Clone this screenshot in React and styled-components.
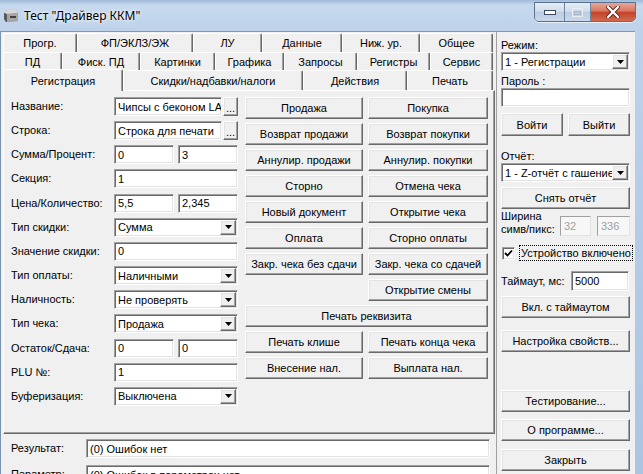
import React from 'react'
import styled, { createGlobalStyle, css } from 'styled-components'

const GlobalStyle = createGlobalStyle`
  html, body { margin: 0; padding: 0; background: #b9cfe8; }
  body {
    font-family: "Liberation Sans", Arial, sans-serif;
    font-size: 11px;
    color: #000;
  }
  * { box-sizing: border-box; }
`

const raised = css`
  background: #f0f0f0;
  border: 1px solid;
  border-color: #fff #696969 #696969 #fff;
  box-shadow: inset -1px -1px #a0a0a0, inset 1px 1px #e3e3e3;
`

const sunken = css`
  background: #fff;
  border: 1px solid;
  border-color: #a0a0a0 #fff #fff #a0a0a0;
  box-shadow: inset 1px 1px #696969, inset -1px -1px #e3e3e3;
`

const Window = styled.div`
  width: 643px;
  height: 474px;
  overflow: hidden;
  display: flex;
  flex-direction: column;
  background: linear-gradient(180deg, #9fb9d8 0, #c6d9ee 5px, #bdd2ea 30px, #aac4e2 100%);
`

const TitleBar = styled.div`
  height: 31px;
  flex-shrink: 0;
  display: flex;
  align-items: flex-start;
  padding: 0 7px 0 3px;
`

const AppIcon = styled.svg`
  margin-top: 9px;
  flex-shrink: 0;
`

const Title = styled.div`
  margin: 8px 0 0 5px;
  font-family: "Noto Sans", "Open Sans", sans-serif;
  font-size: 12px;
  line-height: 16px;
  color: #000;
  text-shadow: 0 0 6px #fff, 0 0 3px #fff;
`

const Captions = styled.div`
  display: flex;
  margin: 2px 0 0 auto;
  border: 1px solid #5b6f8d;
  border-radius: 0 0 5px 5px;
  overflow: hidden;
  box-shadow: 0 1px 0 rgba(255, 255, 255, 0.6);
`

const CapBtn = styled.div`
  width: ${p => p.$w}px;
  height: 18px;
  display: flex;
  align-items: center;
  justify-content: center;
  border-left: ${p => (p.$first ? 'none' : '1px solid #6f819b')};
  background: ${p =>
    p.$close
      ? 'linear-gradient(180deg, #e8a898 0, #d9765f 45%, #c4432a 52%, #cf6a4e 100%)'
      : 'linear-gradient(180deg, #e4ecf6 0, #d2deec 45%, #bccde2 52%, #c9d8ea 100%)'};
`

const Client = styled.div`
  flex: 1;
  width: 635px;
  display: flex;
  background: #f0f0f0;
  border-top: 1px solid #8297b4;
  border-left: 1px solid #7d93b2;
`

const Main = styled.div`
  width: 496px;
  padding: 1px 0 0 2px;
  border-right: 1px solid #a0a0a0;
`

const TabRow = styled.div`
  display: flex;
  align-items: flex-end;
  height: ${p => p.$h}px;
`

const Tab = styled.div`
  width: ${p => p.$w}px;
  height: ${p => (p.$active ? 22 : p.$h)}px;
  margin-bottom: ${p => (p.$active ? -1 : 0)}px;
  position: ${p => (p.$active ? 'relative' : 'static')};
  z-index: ${p => (p.$active ? 2 : 'auto')};
  display: flex;
  align-items: center;
  justify-content: center;
  background: #f0f0f0;
  border: 1px solid;
  border-color: #fff #696969 transparent #fff;
  border-bottom: none;
  border-radius: 2px 2px 0 0;
  box-shadow: inset -1px 0 #a0a0a0;
  white-space: nowrap;
`

const TabBody = styled.div`
  width: 492px;
  height: 344px;
  display: flex;
  gap: 7px;
  padding: 6px 0 0 7px;
  border: 1px solid;
  border-color: #fff #696969 #696969 #fff;
  box-shadow: inset -1px -1px #a0a0a0;
`

const Form = styled.div`
  display: grid;
  grid-template-columns: 103px 124px;
  grid-auto-rows: 19px;
  row-gap: 5.17px;
  align-items: center;
  align-content: start;
`

const Label = styled.div`
  white-space: nowrap;
  line-height: 13px;
`

const Edit = styled.div`
  ${sunken};
  width: ${p => (p.$w ? `${p.$w}px` : '100%')};
  height: ${p => p.$h || 19}px;
  padding: 0 3px;
  display: flex;
  align-items: center;
  overflow: hidden;
  white-space: nowrap;
  flex-shrink: 0;
  color: ${p => (p.$disabled ? '#a0a0a0' : '#000')};
  ${p =>
    p.$disabled &&
    css`
      background: #f7f7f7;
      box-shadow: none;
      border-color: #a0a0a0 #e3e3e3 #e3e3e3 #a0a0a0;
    `}
`

const Pair = styled.div`
  display: flex;
  justify-content: space-between;
`

const FieldWithBtn = styled.div`
  display: flex;
  gap: 1px;
`

const DotsBtn = styled.div`
  ${raised};
  width: 15px;
  height: 19px;
  display: flex;
  align-items: flex-end;
  justify-content: center;
  padding-bottom: 3px;
  line-height: 8px;
`

const Combo = styled.div`
  ${sunken};
  height: 19px;
  padding: 1px;
  display: flex;
  align-items: center;
`

const ComboText = styled.div`
  flex: 1;
  padding-left: 2px;
  white-space: nowrap;
  overflow: hidden;
`

const ComboArrow = styled.div`
  ${raised};
  width: 16px;
  height: 15px;
  display: flex;
  align-items: center;
  justify-content: center;
  flex-shrink: 0;
`

const ButtonGrid = styled.div`
  display: grid;
  grid-template-columns: 118px 120px;
  grid-auto-rows: 22px;
  column-gap: 5px;
  row-gap: 4px;
  align-content: start;
`

const Button = styled.div`
  ${raised};
  height: ${p => p.$h || 22}px;
  margin-top: ${p => p.$mt || 0}px;
  grid-column: ${p => (p.$wide ? '1 / -1' : p.$col || 'auto')};
  display: flex;
  align-items: center;
  justify-content: center;
  white-space: nowrap;
  flex: ${p => (p.$grow ? 1 : 'none')};
`

const Status = styled.div`
  display: grid;
  grid-template-columns: 75px 404px;
  grid-auto-rows: 19px;
  row-gap: 7px;
  align-items: center;
  padding-left: 8px;
  margin-top: 5px;
`

const Side = styled.div`
  width: 138px;
  padding: 0 5px 0 4px;
  display: flex;
  flex-direction: column;
`

const SideLabel = styled(Label)`
  margin-top: ${p => p.$mt || 0}px;
`

const Row = styled.div`
  display: flex;
  align-items: ${p => p.$align || 'center'};
  gap: ${p => p.$gap || 0}px;
  margin-top: ${p => p.$mt || 0}px;
  height: ${p => (p.$h ? `${p.$h}px` : 'auto')};
`

const CheckBox = styled.span`
  ${sunken};
  width: 13px;
  height: 13px;
  display: inline-flex;
  align-items: center;
  justify-content: center;
  margin-left: 1px;
  flex-shrink: 0;
`

const FocusLabel = styled.span`
  border: 1px dotted #000;
  padding: 1px;
  line-height: 12px;
  white-space: nowrap;
  margin-left: 1px;
`

const Arrow = () => (
  <svg width="7" height="4" viewBox="0 0 7 4">
    <polygon points="0,0 7,0 3.5,4" fill="#000" />
  </svg>
)

const ComboBox = ({ value }) => (
  <Combo>
    <ComboText>{value}</ComboText>
    <ComboArrow>
      <Arrow />
    </ComboArrow>
  </Combo>
)

const tabRows = [
  { h: 19, tabs: [['Прогр.', 74], ['ФП/ЭКЛЗ/ЭЖ', 116], ['ЛУ', 69], ['Данные', 80], ['Ниж. ур.', 78], ['Общее', 73]] },
  { h: 18, tabs: [['ПД', 59], ['Фиск. ПД', 78], ['Картинки', 75], ['Графика', 69], ['Запросы', 73], ['Регистры', 73], ['Сервис', 63]] },
  { h: 20, tabs: [['Регистрация', 120, true], ['Скидки/надбавки/налоги', 180], ['Действия', 104], ['Печать', 86]] },
]

const actions = [
  ['Продажа'], ['Покупка'],
  ['Возврат продажи'], ['Возврат покупки'],
  ['Аннулир. продажи'], ['Аннулир. покупки'],
  ['Сторно'], ['Отмена чека'],
  ['Новый документ'], ['Открытие чека'],
  ['Оплата'], ['Сторно оплаты'],
  ['Закр. чека без сдачи'], ['Закр. чека со сдачей'],
  ['Открытие смены', '2'],
  ['Печать реквизита', 'wide'],
  ['Печать клише'], ['Печать конца чека'],
  ['Внесение нал.'], ['Выплата нал.'],
]

export default function App() {
  return (
    <>
      <GlobalStyle />
      <Window>
        <TitleBar>
          <AppIcon width="16" height="14" viewBox="0 0 16 14">
            <path d="M4 1 L13 1 L15 4 L15 12 L3 13 L1 10 L1 4 Z" fill="#8c8c8c" />
            <path d="M4 1 L13 1 L15 4 L4 5 L1 4 Z" fill="#d8d8d8" />
            <path d="M1 4 L4 5 L4 13 L3 13 L1 10 Z" fill="#5a5a5a" />
            <path d="M4 5 L15 4 L15 12 L4 13 Z" fill="#a6a6a6" />
            <rect x="7" y="7" width="6" height="2" fill="#404040" />
          </AppIcon>
          <Title>Тест "Драйвер ККМ"</Title>
          <Captions>
            <CapBtn $w={29} $first>
              <svg width="12" height="5" viewBox="0 0 12 5">
                <rect x="0.5" y="0.5" width="11" height="4" fill="#fff" stroke="#3b4a60" />
              </svg>
            </CapBtn>
            <CapBtn $w={26}>
              <svg width="11" height="9" viewBox="0 0 11 9">
                <rect x="0.5" y="0.5" width="10" height="8" fill="none" stroke="#e9eef5" />
                <rect x="2.5" y="3.5" width="6" height="3" fill="none" stroke="#a9b7c9" />
              </svg>
            </CapBtn>
            <CapBtn $w={45} $close>
              <svg width="14" height="12" viewBox="0 0 14 12">
                <path d="M2 1 L12 11 M12 1 L2 11" stroke="#5a2016" strokeWidth="4" strokeLinecap="round" />
                <path d="M2 1 L12 11 M12 1 L2 11" stroke="#fff" strokeWidth="2.4" strokeLinecap="round" />
              </svg>
            </CapBtn>
          </Captions>
        </TitleBar>

        <Client>
          <Main>
            {tabRows.map((row, i) => (
              <TabRow key={i} $h={row.h}>
                {row.tabs.map(([name, w, active]) => (
                  <Tab key={name} $w={w} $h={row.h} $active={active}>
                    {name}
                  </Tab>
                ))}
              </TabRow>
            ))}
            <TabBody>
              <Form>
                <Label>Название:</Label>
                <FieldWithBtn>
                  <Edit $w={108}>Чипсы с беконом LA</Edit>
                  <DotsBtn>...</DotsBtn>
                </FieldWithBtn>

                <Label>Строка:</Label>
                <FieldWithBtn>
                  <Edit $w={108}>Строка для печати</Edit>
                  <DotsBtn>...</DotsBtn>
                </FieldWithBtn>

                <Label>Сумма/Процент:</Label>
                <Pair>
                  <Edit $w={60}>0</Edit>
                  <Edit $w={60}>3</Edit>
                </Pair>

                <Label>Секция:</Label>
                <Edit>1</Edit>

                <Label>Цена/Количество:</Label>
                <Pair>
                  <Edit $w={60}>5,5</Edit>
                  <Edit $w={60}>2,345</Edit>
                </Pair>

                <Label>Тип скидки:</Label>
                <ComboBox value="Сумма" />

                <Label>Значение скидки:</Label>
                <Edit>0</Edit>

                <Label>Тип оплаты:</Label>
                <ComboBox value="Наличными" />

                <Label>Наличность:</Label>
                <ComboBox value="Не проверять" />

                <Label>Тип чека:</Label>
                <ComboBox value="Продажа" />

                <Label>Остаток/Сдача:</Label>
                <Pair>
                  <Edit $w={60}>0</Edit>
                  <Edit $w={60}>0</Edit>
                </Pair>

                <Label>PLU №:</Label>
                <Edit>1</Edit>

                <Label>Буферизация:</Label>
                <ComboBox value="Выключена" />
              </Form>

              <ButtonGrid>
                {actions.map(([name, kind]) => (
                  <Button key={name} $wide={kind === 'wide'} $col={kind === '2' ? '2' : undefined}>
                    {name}
                  </Button>
                ))}
              </ButtonGrid>
            </TabBody>

            <Status>
              <Label>Результат:</Label>
              <Edit>(0) Ошибок нет</Edit>
              <Label>Параметр:</Label>
              <Edit>(0) Ошибок в параметрах нет</Edit>
            </Status>
          </Main>

          <Side>
            <SideLabel $mt={7}>Режим:</SideLabel>
            <ComboBox value="1 - Регистрации" />
            <SideLabel $mt={4}>Пароль :</SideLabel>
            <Edit />
            <Row $mt={6} $gap={5}>
              <Button $grow $h={23}>Войти</Button>
              <Button $grow $h={23}>Выйти</Button>
            </Row>
            <SideLabel $mt={14}>Отчёт:</SideLabel>
            <ComboBox value="1 - Z-отчёт с гашением" />
            <Button $mt={5}>Снять отчёт</Button>
            <Row $mt={1} $align="flex-start">
              <Label style={{ width: 59 }}>
                Ширина
                <br />
                симв/пикс:
              </Label>
              <Edit $w={31} $h={20} $disabled style={{ marginTop: 6 }}>32</Edit>
              <Edit $w={33} $h={20} $disabled style={{ marginTop: 6, marginLeft: 6 }}>336</Edit>
            </Row>
            <Row $mt={9} $h={16} $gap={3}>
              <CheckBox>
                <svg width="9" height="9" viewBox="0 0 9 9">
                  <path d="M1 4 L3.5 6.5 L8 1.5" fill="none" stroke="#000" strokeWidth="1.8" />
                </svg>
              </CheckBox>
              <FocusLabel>Устройство включено</FocusLabel>
            </Row>
            <Row $mt={10}>
              <Label style={{ width: 70 }}>Таймаут, мс:</Label>
              <Edit $w={58} $h={20}>5000</Edit>
            </Row>
            <Button $mt={5}>Вкл. с таймаутом</Button>
            <Button $mt={12}>Настройка свойств...</Button>
            <Button $mt={38}>Тестирование...</Button>
            <Button $mt={7}>О программе...</Button>
            <Button $mt={8}>Закрыть</Button>
          </Side>
        </Client>
      </Window>
    </>
  )
}
